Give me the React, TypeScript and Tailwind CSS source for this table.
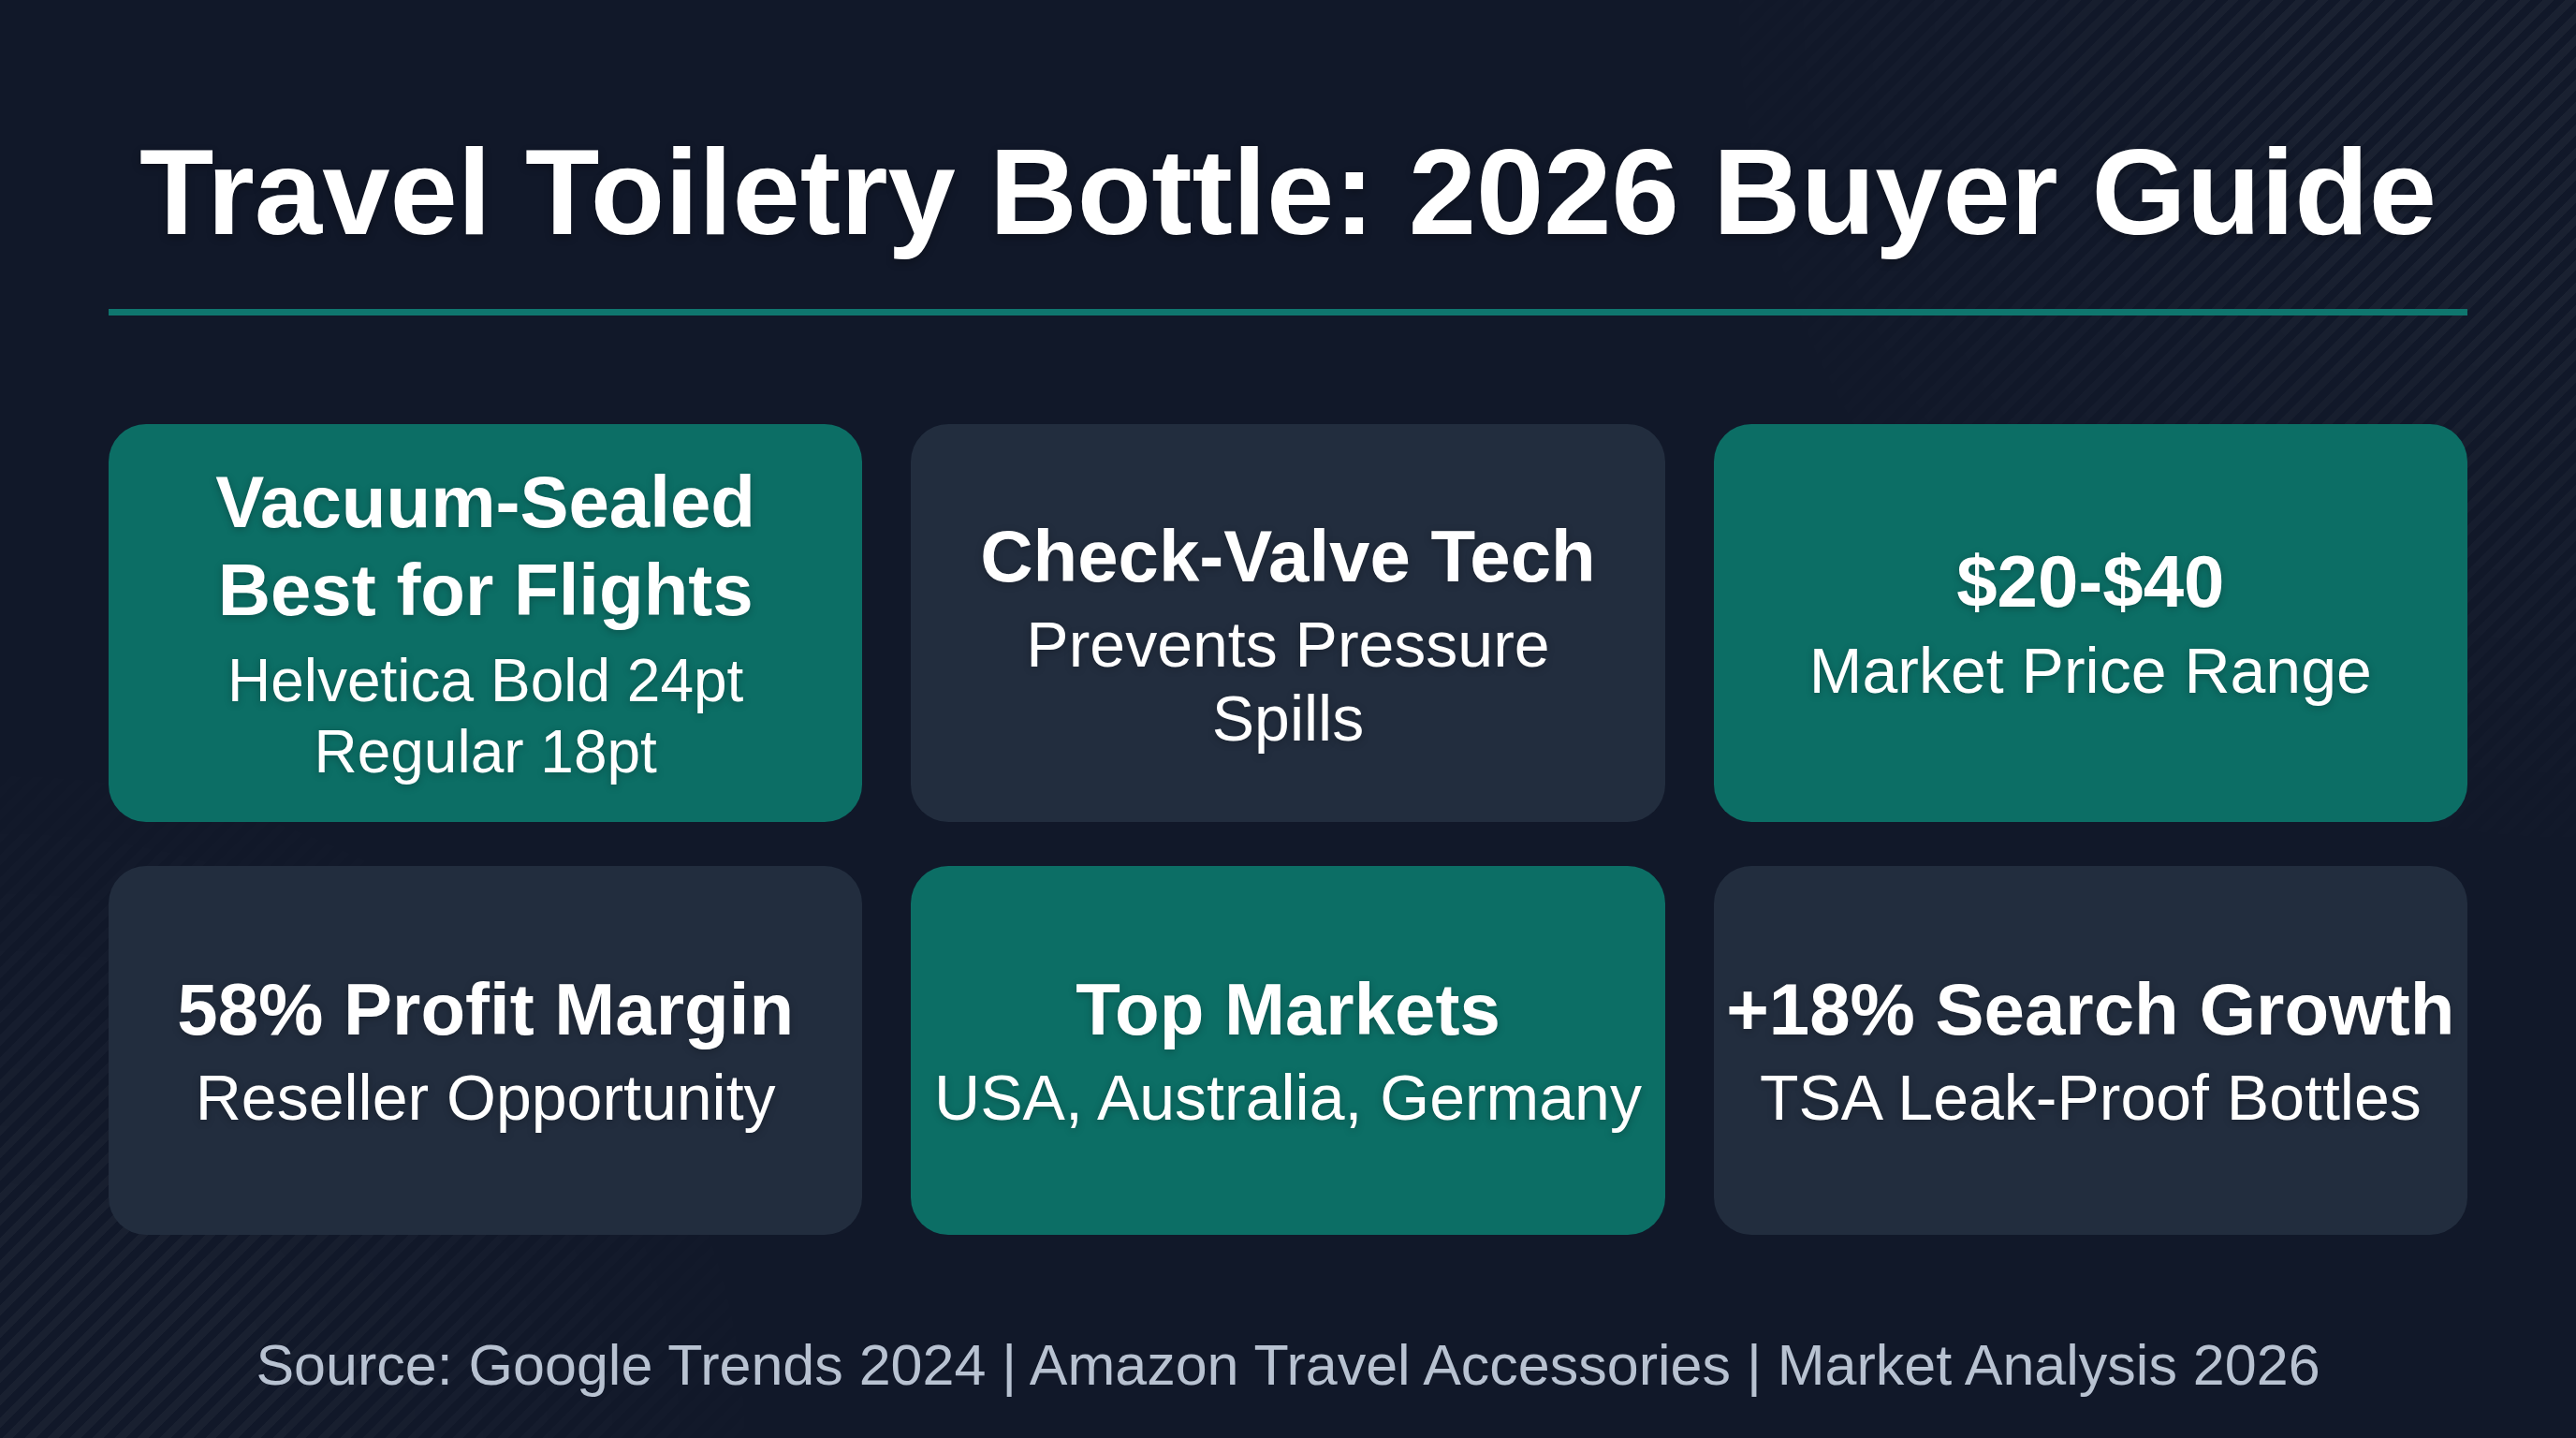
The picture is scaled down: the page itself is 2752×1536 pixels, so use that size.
import React from "react";

type Card = {
  teal: boolean;
  title: string[];
  lines: string[];
  small?: boolean;
  shift?: boolean;
};

const cards: Card[] = [
  {
    teal: true,
    title: ["Vacuum-Sealed", "Best for Flights"],
    lines: ["Helvetica Bold 24pt", "Regular 18pt"],
    small: true,
  },
  { teal: false, title: ["Check-Valve Tech"], lines: ["Prevents Pressure", "Spills"], shift: true },
  { teal: true, title: ["$20-$40"], lines: ["Market Price Range"] },
  { teal: false, title: ["58% Profit Margin"], lines: ["Reseller Opportunity"] },
  { teal: true, title: ["Top Markets"], lines: ["USA, Australia, Germany"] },
  { teal: false, title: ["+18% Search Growth"], lines: ["TSA Leak-Proof Bottles"] },
];

function InfoCard({ card }: { card: Card }) {
  return (
    <div
      className={`flex flex-col items-center justify-center rounded-[40px] px-4 text-center text-white [text-shadow:0_2px_8px_rgba(0,0,0,0.25)] ${
        card.teal ? "bg-[#0c6e65]" : "bg-[#222d3e]"
      } ${card.shift ? "pt-[24px]" : ""}`}
    >
      {card.title.map((t) => (
        <div key={t} className="text-[78px] font-bold leading-[1.2] whitespace-nowrap">
          {t}
        </div>
      ))}
      <div className={card.small ? "mt-3" : "mt-2"}>
        {card.lines.map((l) => (
          <div
            key={l}
            className={`whitespace-nowrap ${
              card.small ? "text-[64px] leading-[76px]" : "text-[68px] leading-[79px]"
            }`}
          >
            {l}
          </div>
        ))}
      </div>
    </div>
  );
}

export default function App() {
  return (
    <div className="relative h-[1536px] w-[2752px] overflow-hidden bg-[#111829] font-['Liberation_Sans',Arial,sans-serif]">
      {/* corner stripes */}
      <div className="pointer-events-none absolute inset-0 bg-[repeating-linear-gradient(135deg,rgba(255,255,255,0.04)_0px,rgba(255,255,255,0.04)_8px,transparent_8px,transparent_17px)] [mask-image:radial-gradient(ellipse_1000px_1000px_at_100%_0%,black_30%,transparent_100%)]" />
      <div className="pointer-events-none absolute inset-0 bg-[repeating-linear-gradient(135deg,rgba(255,255,255,0.035)_0px,rgba(255,255,255,0.035)_8px,transparent_8px,transparent_17px)] [mask-image:radial-gradient(ellipse_900px_800px_at_0%_100%,black_30%,transparent_100%)]" />

      <div className="relative flex flex-col px-[116px] pt-[140px]">
        <h1 className="text-center text-[130px] font-bold leading-none text-white [text-shadow:0_3px_10px_rgba(0,0,0,0.3)]">
          Travel Toiletry Bottle: 2026 Buyer Guide
        </h1>

        <div className="mt-[60px] h-[7px] bg-[#0f766e]" />

        <div className="mt-[116px] grid grid-cols-3 grid-rows-[425px_394px] gap-x-[52px] gap-y-[47px]">
          {cards.map((c, i) => (
            <InfoCard key={i} card={c} />
          ))}
        </div>

        <p className="mt-[109px] text-center text-[61px] leading-none text-[#b8c2d1]">
          Source: Google Trends 2024 | Amazon Travel Accessories | Market Analysis 2026
        </p>
      </div>
    </div>
  );
}
